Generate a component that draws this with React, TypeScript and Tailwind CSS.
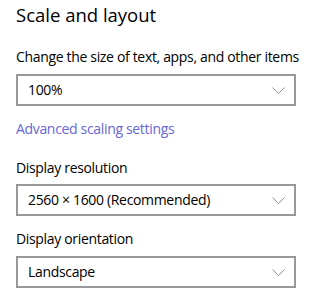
import React from "react";

function Chevron() {
  return (
    <svg width="13" height="7" viewBox="0 0 13 7" fill="none" className="shrink-0">
      <path d="M0.5 0.5 L6.5 6.5 L12.5 0.5" stroke="#8f8f8f" strokeWidth="1" />
    </svg>
  );
}

function Combo({ value }: { value: string }) {
  return (
    <div className="w-[280px] h-[32px] border-2 border-[#999999] flex items-center justify-between pl-[10px] pr-[9px] bg-white">
      <span className="text-[14px] leading-[20px] tracking-[-0.33px] text-black">{value}</span>
      <Chevron />
    </div>
  );
}

export default function App() {
  return (
    <div
      className="w-[330px] h-[296px] bg-white pl-4 pt-[3px] text-black"
      style={{ fontFamily: '"Open Sans", "Noto Sans", sans-serif' }}
    >
      <div className="text-[18.5px] leading-[24px]">Scale and layout</div>
      <div className="mt-[20px] text-[14px] leading-[20px] tracking-[-0.33px] whitespace-nowrap">
        Change the size of text, apps, and other items
      </div>
      <div className="mt-[7px]">
        <Combo value="100%" />
      </div>
      <div className="mt-[13px] text-[14px] leading-[20px] tracking-[-0.33px] text-[#6866d8]">
        Advanced scaling settings
      </div>
      <div className="mt-[19px] text-[14px] leading-[20px] tracking-[-0.33px]">Display resolution</div>
      <div className="mt-[6px]">
        <Combo value="2560 × 1600 (Recommended)" />
      </div>
      <div className="mt-[13px] text-[14px] leading-[20px] tracking-[-0.33px]">Display orientation</div>
      <div className="mt-[7px]">
        <Combo value="Landscape" />
      </div>
    </div>
  );
}
